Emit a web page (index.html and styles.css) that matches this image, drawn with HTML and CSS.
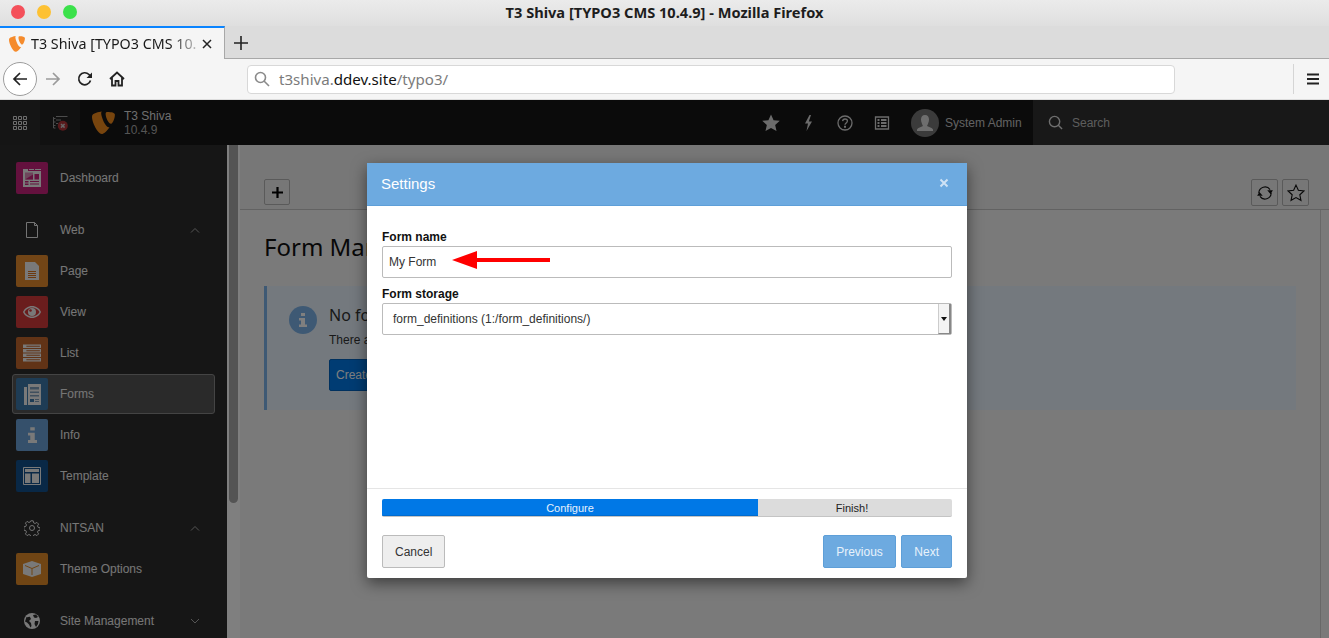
FILE: index.html
```html
<!DOCTYPE html>
<html lang="en">
<head>
<meta charset="utf-8">
<title>T3 Shiva [TYPO3 CMS 10.4.9] - Mozilla Firefox</title>
<link rel="stylesheet" href="styles.css">
</head>
<body>
<div class="window">
  <header class="titlebar">
    <div class="lights"><i class="light red"></i><i class="light amber"></i><i class="light green"></i></div>
    <div class="wintitle">T3 Shiva [TYPO3 CMS 10.4.9] - Mozilla Firefox</div>
  </header>
  <div class="tabstrip">
    <div class="tab">
      <svg class="favicon" viewBox="0 0 25 24"><path d="M19 16.5c-.4.1-.7.2-1.1.2-3.2 0-7.9-11.2-7.9-14.9 0-1.4.3-1.8.8-2.2C6.8.1 2 1.5.5 3.4.2 3.9 0 4.7 0 5.6 0 11.4 6.2 24 10.6 24c2 0 5.5-3.3 8.4-7.5zM16.9 0c4 0 8 .7 8 2.9 0 4.5-2.9 10-4.3 10-2.6 0-5.8-7.1-5.8-10.7C14.8.5 15.4 0 16.9 0z"/></svg>
      <span class="tabtitle">T3 Shiva [TYPO3 CMS 10.</span>
      <svg class="tabclose" viewBox="0 0 10 10"><path d="M1 1l8 8M9 1l-8 8"/></svg>
    </div>
    <svg class="newtab" viewBox="0 0 14 14"><path d="M7 0v14M0 7h14"/></svg>
  </div>
  <nav class="toolbar">
    <button class="backbtn"><svg viewBox="0 0 16 16"><path d="M15 8H2M8 2L2 8l6 6"/></svg></button>
    <svg class="navicon fwd" viewBox="0 0 16 16"><path d="M1 8h13M8 2l6 6-6 6"/></svg>
    <svg class="navicon reload" viewBox="0 0 16 16"><path d="M13.500 9.500A6 6 0 1 1 12 3.500L14 6"/><path class="solid" d="M15 1.500V7H9.500z"/></svg>
    <svg class="navicon home" viewBox="0 0 16 16"><path d="M1 8l7-6.500L15 8M3 6.500V14.500h3.500V10h3v4.500H13V6.500"/></svg>
    <div class="urlbar">
      <svg viewBox="0 0 16 16"><circle cx="6.500" cy="6.500" r="5"/><path d="M10 10l5 5"/></svg>
      <span class="url">t3shiva.<b>ddev.site</b>/typo3/</span>
    </div>
    <div class="menusep"></div>
    <svg class="burger" viewBox="0 0 12 12"><path d="M0 1.500h12M0 6h12M0 10.500h12"/></svg>
  </nav>

  <div class="app">
    <div class="topbar">
      <div class="grid-btn">
        <svg viewBox="0 0 14 14"><path class="gridp" d="M.5.500h3v3h-3zM5.500.500h3v3h-3zM10.500.500h3v3h-3zM.5 5.500h3v3h-3zM5.500 5.500h3v3h-3zM10.500 5.500h3v3h-3zM.5 10.500h3v3h-3zM5.500 10.500h3v3h-3zM10.500 10.500h3v3h-3z"/></svg>
      </div>
      <div class="tree-btn">
        <svg viewBox="0 0 16 16"><path class="treel" d="M1.500 2v11M1.500 3.500h2M1.500 7h2M1.500 10.500h2M1.500 13h2M4 1.500h11.500M4 5h5M4 8.500h2"/><circle cx="10.800" cy="10.800" r="5" class="treec"/><path class="treex" d="M9 9l3.600 3.600M12.600 9L9 12.600"/></svg>
      </div>
      <div class="brand">
        <svg class="logo" viewBox="0 0 25 24"><path d="M19 16.500c-.4.1-.7.2-1.100.2-3.200 0-7.900-11.200-7.900-14.900 0-1.400.3-1.800.8-2.200C6.800.1 2 1.500.5 3.400.2 3.900 0 4.700 0 5.600 0 11.400 6.200 24 10.600 24c2 0 5.500-3.300 8.400-7.500zM16.900 0c4 0 8 .7 8 2.900 0 4.500-2.900 10-4.300 10-2.600 0-5.800-7.100-5.800-10.700C14.800.5 15.400 0 16.900 0z"/></svg>
        <div class="brandtext"><div>T3 Shiva</div><div class="ver">10.4.9</div></div>
      </div>
      <div class="topright">
        <svg class="ti star" viewBox="0 0 16 16"><path d="M8 .5l2.300 5 5.500.6-4.100 3.700 1.200 5.400L8 12.400l-4.900 2.800 1.200-5.400L.2 6.100l5.500-.6z"/></svg>
        <svg class="ti bolt" viewBox="0 0 16 16"><path d="M9.500 0L5 8.500h3L6.500 16 12 6.500H8.800L11 0z"/></svg>
        <svg class="ti help" viewBox="0 0 16 16"><circle class="ol" cx="8" cy="8" r="7"/><path class="ol" d="M5.600 6.200C5.800 4.700 6.800 4 8 4c1.400 0 2.400.9 2.400 2.100 0 1.800-2.400 1.900-2.400 3.700"/><path d="M7 10.800h2v2H7z"/></svg>
        <svg class="ti list" viewBox="0 0 16 16"><path class="ol" d="M1.500 2h13v12h-13z"/><path d="M3.500 4h2v2h-2zM7 4h5.500v2H7zM3.500 7h2v2h-2zM7 7h5.500v2H7zM3.500 10h2v2h-2zM7 10h5.500v2H7z"/></svg>
        <div class="avatar"><svg viewBox="0 0 28 28"><path d="M14 6c2.600 0 4 2 4 4.500S16.500 16 16 17c2 1 5 1.500 6 3.500V22H6v-1.500c1-2 4-2.500 6-3.500-.5-1-2-4-2-6.500S11.400 6 14 6z"/></svg></div>
        <span class="user">System Admin</span>
      </div>
      <div class="search">
        <svg viewBox="0 0 16 16"><circle cx="7" cy="7" r="5.500"/><path d="M11 11l4 4"/></svg>
        <span>Search</span>
      </div>
    </div>

    <div class="main">
      <aside class="sidebar">
        <a class="item"><span class="sq dash"><svg viewBox="0 0 18 18"><path class="ig" d="M6 0h5v1H6zM12 0h6v1h-6zM0 0h5v2h13v16H0z"/><path class="dkl" d="M2 3.500h8v7H2z"/><path class="dk" d="M2 10.500l8-5v5zM11.500 5h4.500v5.500h-4.500zM7 12h9v1H7zM7 14.500h9v1H7zM2 12h3.500v1.500H2zM2 14.500h3.500V16H2z"/></svg></span><span class="lbl">Dashboard</span></a>

        <div class="head gap"><span class="hi"><svg viewBox="0 0 14 16"><path class="ln" d="M1.500.5h8l3 3v12h-11zM9.500.5v3h3"/></svg></span><span class="lbl">Web</span><svg class="chev" viewBox="0 0 10 6"><path d="M1 5.500L5 1.500l4 4"/></svg></div>
        <a class="item"><span class="sq page"><svg viewBox="0 0 14 18"><path class="ig" d="M0 0h10l4 4v14H0z"/><path class="or" d="M3 9h8v1H3zM3 11h8v1H3zM3 13h8v1H3zM3 15h8v1H3z"/></svg></span><span class="lbl">Page</span></a>
        <a class="item"><span class="sq view"><svg viewBox="0 0 18 12"><path class="ig" d="M9 0c4 0 7.500 2.500 9 6-1.500 3.500-5 6-9 6s-7.500-2.500-9-6c1.500-3.500 5-6 9-6z"/><path class="re" d="M9 1.500C6 1.500 3 3.200 1.500 6 3 8.800 6 10.500 9 10.500s6-1.700 7.500-4.500C15 3.200 12 1.500 9 1.500z"/><circle class="ig" cx="9" cy="6" r="4"/><circle class="re" cx="7.500" cy="4.500" r="1.300"/></svg></span><span class="lbl">View</span></a>
        <a class="item"><span class="sq lst"><svg viewBox="0 0 16 15"><path class="ig" d="M0 0h16v3H0zM0 4h16v3H0zM0 8h16v3H0zM0 12h16v3H0z"/><path class="br" d="M3 1h12v1H3zM3 5h12v1H3zM3 9h12v1H3zM3 13h12v1H3z"/></svg></span><span class="lbl">List</span></a>
        <a class="item active"><span class="sq form"><svg class="formi" viewBox="0 0 17 21"><path class="ig" d="M4 0h13v21H4zM0 3h3v18H0z"/><path class="bl" d="M6 3h9v2.500H6zM6 7.500h9V9H6zM6 11h9v1.500H6z"/><path class="bd" d="M6 15h4v3H6z"/><path class="bl" d="M11 15h4v1H11zM11 17h4v1H11z"/></svg></span><span class="lbl">Forms</span></a>
        <a class="item"><span class="sq info"><svg viewBox="0 0 8 14"><path class="ig" d="M2 0h4v3H2zM0 5h6v6.500h2V14H0v-2.500h2V7.500H0z"/></svg></span><span class="lbl">Info</span></a>
        <a class="item"><span class="sq tmpl"><svg viewBox="0 0 18 18"><path class="lnw" d="M.500.500h17v17H.500z"/><path class="ig" d="M2 2h14v3H2zM2 6.500h5.500V16H2zM9 6.500h7V16H9z"/></svg></span><span class="lbl">Template</span></a>

        <div class="head gap"><span class="hi"><svg viewBox="0 0 16 16"><circle class="ln" cx="8" cy="8" r="2.500"/><path class="ln" d="M6.800.8h2.400l.4 2 1.500.7 1.800-1.100 1.700 1.700-1.100 1.800.7 1.500 2 .4v2.400l-2 .4-.7 1.500 1.100 1.800-1.700 1.700-1.800-1.100-1.500.7-.4 2H6.800l-.4-2-1.500-.7-1.800 1.100-1.700-1.700 1.100-1.800-.7-1.500-2-.4V6.800l2-.4.700-1.500-1.100-1.800 1.700-1.700 1.800 1.100 1.500-.7z"/></svg></span><span class="lbl">NITSAN</span><svg class="chev" viewBox="0 0 10 6"><path d="M1 5.500L5 1.500l4 4"/></svg></div>
        <a class="item"><span class="sq theme"><svg viewBox="0 0 18 16"><path class="ig" d="M9 0l9 3v10l-9 3-9-3V3z"/><path class="lnb" d="M2 4.500l7 3 7-3M9 7.500V14"/></svg></span><span class="lbl">Theme Options</span></a>

        <div class="head gap"><span class="hi"><svg viewBox="0 0 16 16"><circle class="ig" cx="8" cy="8" r="8"/><path class="bk" d="M2.500 4c1 .5 2.500-.5 3.500 0l1 2-2 2 2 2 .5 3-1 1.500-1.500-3-2-2-2-1zM9 2l3-.5 2 2.500-2 1-2-.5zM11 8l3.500 0-.5 3-2 3-1.500-3z"/></svg></span><span class="lbl">Site Management</span><svg class="chev" viewBox="0 0 10 6"><path d="M1 1l4 4 4-4"/></svg></div>
      </aside>
      <div class="rail"><div class="thumb"></div></div>
      <main class="content">
        <div class="docheader">
          <button class="dbtn plus"><svg viewBox="0 0 10 10"><path d="M5 0v10M0 5h10"/></svg></button>
          <div class="dright">
            <button class="dbtn"><svg viewBox="0 0 16 16"><path class="thin" d="M2.500 8A5.500 5.500 0 0 1 12.500 5M13.500 8A5.500 5.500 0 0 1 3.500 11"/><path d="M10 5.500h5L13 9zM1 10.500h5L3 7z" class="solid2"/></svg></button>
            <button class="dbtn"><svg viewBox="0 0 16 16"><path class="thin" d="M8 1l2.100 4.600 5 .6-3.700 3.400 1 4.900L8 12.100l-4.400 2.400 1-4.900L.9 6.200l5-.6z"/></svg></button>
          </div>
        </div>
        <div class="body">
          <h1>Form Man</h1>
          <div class="callout">
            <span class="cicon"><svg viewBox="0 0 8 14"><path d="M2 0h4v3H2zM0 5h6v6.500h2V14H0v-2.500h2V7.500H0z"/></svg></span>
            <div>
              <div class="ctitle">No fo</div>
              <p>There a</p>
              <button class="create">Create</button>
            </div>
          </div>
        </div>
      </main>
    </div>

    <div class="backdrop"></div>
    <section class="modal">
      <div class="mhead"><span>Settings</span><svg viewBox="0 0 10 10"><path d="M1.500 1.500l7 7M8.500 1.500l-7 7"/></svg></div>
      <div class="mbody">
        <label>Form name</label>
        <div class="field namefield">My Form
          <svg class="arrow" viewBox="0 0 98 18"><path d="M0 9L25 0v7h73v4H25v7z"/></svg>
        </div>
        <label>Form storage</label>
        <div class="field select">form_definitions (1:/form_definitions/)
          <span class="spin"><i></i></span>
        </div>
      </div>
      <div class="mfoot">
        <div class="progress"><div class="pstep on">Configure</div><div class="pstep finish">Finish!</div></div>
        <div class="actions">
          <button class="btn cancel">Cancel</button>
          <div class="navbtns"><button class="btn prim prev">Previous</button><button class="btn prim">Next</button></div>
        </div>
      </div>
    </section>
  </div>
</div>
</body>
</html>
```

FILE: styles.css
```css
* { box-sizing: border-box; }
html, body { margin: 0; height: 100%; overflow: hidden; }
body { font-family: "Liberation Sans", Arial, sans-serif; font-size: 12px; color: #333; }
button { font-family: inherit; }
svg { display: block; }
.window { display: flex; flex-direction: column; height: 638px; width: 1329px; }

.titlebar { height: 26px; padding-bottom: 2px; background: linear-gradient(#ebebeb, #dfdfdf); position: relative; display: flex; align-items: center; justify-content: center; flex: none; }
.lights { position: absolute; left: 11px; top: 5px; display: flex; gap: 12px; }
.light { width: 14px; height: 14px; border-radius: 50%; display: block; }
.red { background: #f4505a; } .amber { background: #fdc133; } .green { background: #3be14b; }
.wintitle { font-family: "Noto Sans", sans-serif; font-weight: 700; font-size: 14.6px; color: #1d1d1d; }

.tabstrip { height: 33px; background: #dcdcdc; border-bottom: 1px solid #a8a8a8; display: flex; align-items: stretch; flex: none; }
.tab { width: 225px; height: 33px; background: #f5f5f5; border-top: 2px solid #0a84ff; border-right: 1px solid #a8a8a8; display: flex; align-items: center; padding: 0 9px; flex: none; }
.favicon { width: 16px; height: 16px; fill: #f58b2c; flex: none; }
.tabtitle { font-family: "Noto Sans", sans-serif; font-size: 14.3px; color: #1a1a1a; white-space: nowrap; width: 165px; margin-left: 6px; -webkit-mask-image: linear-gradient(90deg, #000 140px, rgba(0,0,0,.25) 165px); mask-image: linear-gradient(90deg, #000 140px, rgba(0,0,0,.25) 165px); }
.tabclose { width: 10px; height: 10px; margin-left: 6px; fill: none; stroke: #222; stroke-width: 1.500; flex: none; }
.newtab { width: 14px; height: 14px; margin: 10px 0 0 9px; fill: none; stroke: #222; stroke-width: 1.600; }

.toolbar { height: 41px; background: #f5f5f5; border-bottom: 1px solid #ddd; display: flex; align-items: center; padding-left: 3px; flex: none; }
.backbtn { width: 34px; height: 34px; border-radius: 50%; background: #fff; border: 1px solid #9d9d9d; padding: 0; display: flex; align-items: center; justify-content: center; flex: none; }
.backbtn svg { width: 16px; height: 16px; fill: none; stroke: #222; stroke-width: 1.700; }
.navicon { width: 16px; height: 16px; fill: none; stroke: #222; stroke-width: 1.700; flex: none; }
.navicon .solid { fill: #222; stroke: none; }
.fwd { stroke: #9a9a9a; margin-left: 8px; }
.reload { margin-left: 16px; }
.home { margin-left: 16px; stroke-width: 1.800; }
.urlbar { width: 928px; height: 29px; margin-left: 122px; background: #fff; border: 1px solid #d8d8d8; border-radius: 4px; display: flex; align-items: center; padding-left: 6px; flex: none; }
.urlbar svg { width: 16px; height: 16px; fill: none; stroke: #8a8a8a; stroke-width: 1.600; flex: none; }
.url { font-family: "Noto Sans", sans-serif; font-size: 15.1px; color: #7b7b7b; margin-left: 9px; }
.url b { font-weight: 400; color: #111; }
.menusep { width: 1px; height: 30px; background: #d5d5d5; margin-left: 118px; flex: none; }
.burger { width: 12px; height: 12px; margin-left: 13px; fill: none; stroke: #222; stroke-width: 1.800; flex: none; }

.app { flex: 1; position: relative; display: flex; flex-direction: column; min-height: 0; }
.topbar { height: 45px; background: #161616; display: flex; align-items: stretch; color: #eee; flex: none; }
.grid-btn { width: 40px; background: #2a2a2a; display: flex; align-items: center; justify-content: center; }
.grid-btn svg { width: 14px; height: 14px; }
.gridp { fill: none; stroke: #ddd; stroke-width: 1; }
.tree-btn { width: 40px; background: #222; display: flex; align-items: center; justify-content: center; }
.tree-btn svg { width: 16px; height: 16px; }
.treel { fill: none; stroke: #999; stroke-width: 1; }
.treec { fill: #b03438; }
.treex { stroke: #ccc; stroke-width: 1.500; fill: none; }
.brand { display: flex; align-items: center; padding-left: 12px; gap: 9px; }
.logo { width: 23px; height: 24px; fill: #f08a1c; }
.brandtext { font-size: 12px; line-height: 14px; color: #ddd; }
.ver { color: #aaa; }
.topright { margin-left: auto; display: flex; align-items: center; width: 271px; }
.ti { width: 16px; height: 16px; fill: #d8d8d8; margin-right: 21px; flex: none; }
.star { width: 18px; height: 18px; margin-right: 20px; }
.ol { fill: none; stroke: #d8d8d8; stroke-width: 1.300; }
.avatar { width: 28px; height: 28px; border-radius: 50%; background: #777; flex: none; overflow: hidden; }
.avatar svg { width: 28px; height: 28px; fill: #ddd; }
.user { margin-left: 6px; color: #c4c4c4; white-space: nowrap; }
.search { width: 296px; background: #313131; display: flex; align-items: center; padding-left: 15px; color: #bbb; flex: none; }
.search svg { width: 15px; height: 15px; fill: none; stroke: #ddd; stroke-width: 1.500; margin-right: 9px; }

.main { flex: 1; display: flex; min-height: 0; }
.sidebar { width: 227px; background: #2c2c2c; padding: 12px 12px 0; overflow: hidden; flex: none; color: #ececec; }
.item, .head { height: 41px; display: flex; align-items: center; padding-left: 4px; border-radius: 3px; border: 1px solid transparent; width: 203px; }
.gap { margin-top: 11px; }
.sq { width: 32px; height: 32px; border-radius: 2px; display: flex; align-items: center; justify-content: center; flex: none; margin-left: -1px; }
.hi { width: 32px; height: 32px; display: flex; align-items: center; justify-content: center; flex: none; margin-left: -1px; }
.hi svg { width: 16px; height: 16px; }
.lbl { margin-left: 12px; font-size: 12px; white-space: nowrap; }
.chev { width: 10px; height: 6px; margin-left: auto; margin-right: 14px; fill: none; stroke: #aaa; stroke-width: 1; }
.active { background: #555; border-color: #888; height: 40px; margin-top: 1px; }
.sq svg { width: 18px; height: 18px; }
.sq .formi { width: 17px; height: 21px; }
.ig { fill: #f2f2f2; }
.ln { fill: none; stroke: #e8e8e8; stroke-width: 1; }
.lnw { fill: none; stroke: #f2f2f2; stroke-width: 1; }
.dash { background: #c8237c; } .dk { fill: #c8237c; } .dkl { fill: #dd8cb8; }
.page { background: #e58a2c; } .or { fill: #d9721c; }
.view { background: #d43a3a; } .re { fill: #d43a3a; }
.lst { background: #c2662c; } .br { fill: #c2662c; }
.form { background: #3c79ab; } .bl { fill: #7f9fbc; } .bd { fill: #3c79ab; }
.info { background: #6ba1d7; }
.info svg { width: 9px; height: 16px; }
.tmpl { background: #12508c; }
.theme { background: #e08a28; } .lnb { fill: none; stroke: #e08a28; stroke-width: 1; }
.bk { fill: #2c2c2c; }

.rail { width: 13px; background: #fff; padding: 0 2px; flex: none; }
.thumb { width: 9px; height: 358px; background: #a9a9a9; border-radius: 0 0 5px 5px; }
.content { flex: 1; background: #f5f5f5; min-width: 0; display: flex; flex-direction: column; }
.docheader { height: 65px; border-bottom: 1px solid #c4c4c4; padding: 34px 20px 0 24px; display: flex; justify-content: space-between; background: #eee; flex: none; }
.dbtn { width: 27px; height: 27px; border: 1px solid #b4b4b4; border-radius: 2px; background: #eee; padding: 0; display: flex; align-items: center; justify-content: center; }
.plus { width: 26px; height: 26px; }
.plus svg { width: 11px; height: 11px; fill: none; stroke: #000; stroke-width: 2; }
.dright { display: flex; gap: 4px; }
.dbtn svg { width: 18px; height: 18px; }
.dbtn.plus svg { width: 11px; height: 11px; }
.thin { fill: none; stroke: #111; stroke-width: 1; }
.solid2 { fill: #111; }
.body { flex: 1; margin-right: 8px; border-right: 1px solid #d0d0d0; padding: 21px 24px 0; }
h1 { margin: 0 0 23px; font-family: "Noto Sans", sans-serif; font-weight: 400; font-size: 24px; line-height: 32px; color: #111; }
.callout { height: 124px; background: #e8f2fd; border-left: 3px solid #7db3e8; padding: 18px 22px; display: flex; gap: 12px; }
.cicon { width: 28px; height: 28px; margin-top: 2px; border-radius: 50%; background: #7db3e8; display: flex; align-items: center; justify-content: center; flex: none; }
.cicon svg { width: 8px; height: 14px; fill: #fff; }
.ctitle { font-family: "Noto Sans", sans-serif; font-size: 16px; margin-bottom: 7px; }
.callout p { margin: 0 0 12px; }
.create { height: 32px; background: #0078e6; border: 1px solid #0062bf; color: #fff; font-size: 12px; border-radius: 2px; padding: 0 6px; }

.backdrop { position: absolute; inset: 0; background: rgba(0,0,0,.5); }
.modal { position: absolute; left: 367px; top: 63px; width: 600px; height: 415px; background: #fff; box-shadow: 0 5px 15px rgba(0,0,0,.5); border-radius: 2px; display: flex; flex-direction: column; }
.mhead { height: 43px; background: #6daae0; border-bottom: 1px solid #5e9fd8; display: flex; align-items: center; justify-content: space-between; padding: 0 18px 2px 14px; color: #fff; font-size: 15px; flex: none; }
.mhead svg { width: 10px; height: 10px; fill: none; stroke: #cfe2f5; stroke-width: 2; }
.mbody { flex: 1; padding: 24px 15px 0; }
label { display: block; font-weight: 700; font-size: 12px; line-height: 14px; color: #111; margin-bottom: 2px; }
.field { height: 32px; border: 1px solid #bbb; border-radius: 2px; display: flex; align-items: center; color: #333; padding-left: 6px; font-size: 12px; position: relative; margin-bottom: 9px; }
.arrow { position: absolute; left: 69px; top: 4px; width: 98px; height: 18px; fill: #ff0000; }
.select { padding-left: 10px; }
.spin { position: absolute; right: 0; top: 0; bottom: 0; width: 13px; background: #f4f4f4; border-left: 1px solid #ccc; border-right: 2px solid #888; border-bottom: 1px solid #888; display: flex; align-items: center; justify-content: center; }
.spin i { width: 0; height: 0; border-left: 3.500px solid transparent; border-right: 3.500px solid transparent; border-top: 4px solid #111; }
.mfoot { border-top: 1px solid #e5e5e5; padding: 10px 15px; height: 90px; flex: none; }
.progress { height: 18px; display: flex; border-radius: 2px; overflow: hidden; background: #dcdcdc; border-bottom: 1px solid #c4c4c4; font-size: 11px; }
.pstep { flex: 1; text-align: center; line-height: 18px; color: #222; }
.finish { padding-right: 6px; }
.pstep.on { flex: none; width: 376px; background: #0078e6; color: #e6f1fc; border-bottom: 1px solid #006bce; }
.actions { display: flex; justify-content: space-between; margin-top: 18px; }
.btn { height: 33px; font-size: 12px; border-radius: 2px; padding: 0 12px; border: 1px solid #bbb; background: #eee; color: #333; }
.navbtns { display: flex; gap: 5px; }
.prim { background: #6daae0; border-color: #5e9fd8; color: #e8f2fb; }
.prev { padding: 0 12.500px; }
```
